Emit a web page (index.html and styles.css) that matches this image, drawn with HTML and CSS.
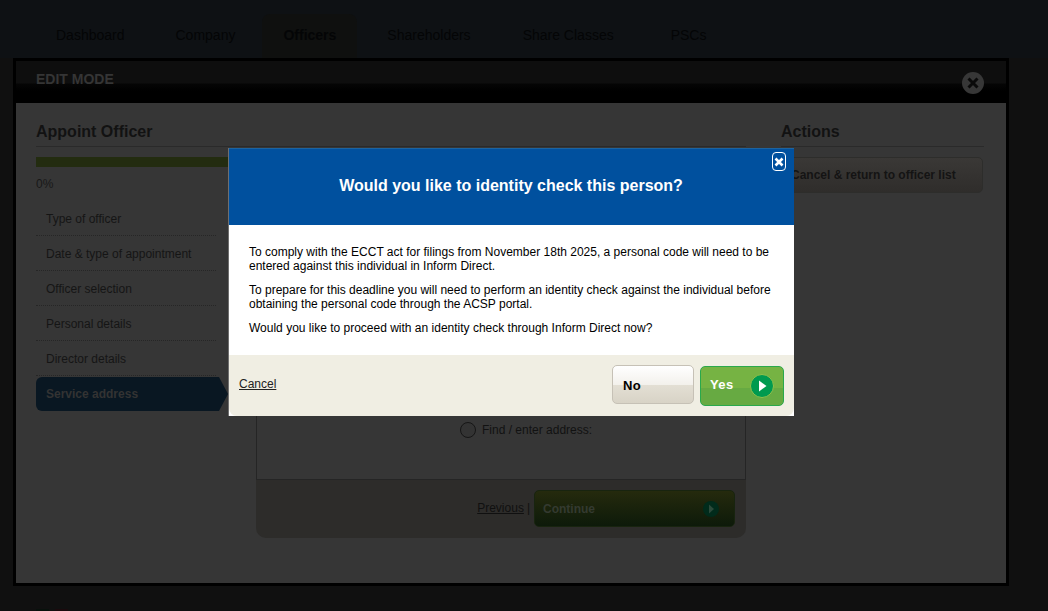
FILE: index.html
```html
<!DOCTYPE html>
<html lang="en">
<head>
<meta charset="utf-8">
<title>Appoint Officer</title>
<link rel="stylesheet" href="styles.css">
</head>
<body>
<nav class="nav">
  <a class="tab t-dash">Dashboard</a>
  <a class="tab t-comp">Company</a>
  <a class="tab tab-on">Officers</a>
  <a class="tab t-share">Shareholders</a>
  <a class="tab t-class">Share Classes</a>
  <a class="tab t-psc">PSCs</a>
</nav>
<section class="editor">
  <header class="editor-head">
    <span class="edit-mode">EDIT MODE</span>
    <span class="editor-close"><svg viewBox="0 0 22 22" width="22" height="22"><path d="M6.5 6.5l9 9M15.500 6.500l-9 9" stroke="#0a0a0a" stroke-width="3"/></svg></span>
  </header>
  <div class="editor-body">
    <div class="col-main">
      <h2 class="heading">Appoint Officer</h2>
      <div class="wizard">
        <aside class="side">
          <div class="progress"></div>
          <div class="pct">0%</div>
          <ul class="steps">
            <li class="step">Type of officer</li>
            <li class="step">Date &amp; type of appointment</li>
            <li class="step">Officer selection</li>
            <li class="step">Personal details</li>
            <li class="step">Director details</li>
            <li class="step step-on">Service address</li>
          </ul>
        </aside>
        <div class="panel">
          <div class="panel-box">
            <label class="find"><span class="radio"></span>Find / enter address:</label>
          </div>
          <div class="panel-foot">
            <a class="prev">Previous</a><span class="sep">|</span>
            <a class="continue">Continue<span class="cont-ico"><svg viewBox="0 0 16 16" width="16" height="16"><path d="M6 3.500l5 4.500-5 4.500z" fill="#2c4a3b"/></svg></span></a>
          </div>
        </div>
      </div>
    </div>
    <aside class="col-actions">
      <h2 class="heading">Actions</h2>
      <a class="action-btn">Cancel &amp; return to officer list</a>
    </aside>
  </div>
</section>
<footer class="foot"><span class="foot-a"></span><span class="foot-b"></span></footer>

<div class="dialog" role="dialog">
  <div class="dlg-head">
    <h1 class="dlg-title">Would you like to identity check this person?</h1>
    <span class="dlg-close"><svg viewBox="0 0 10 10" width="10" height="10"><path d="M1.500 1.500l7 7M8.500 1.500l-7 7" stroke="#fff" stroke-width="2.600"/></svg></span>
  </div>
  <div class="dlg-body">
    <p>To comply with the ECCT act for filings from November 18th 2025, a personal code will need to be entered against this individual in Inform Direct.</p>
    <p>To prepare for this deadline you will need to perform an identity check against the individual before obtaining the personal code through the ACSP portal.</p>
    <p>Would you like to proceed with an identity check through Inform Direct now?</p>
  </div>
  <div class="dlg-foot">
    <a class="dlg-cancel">Cancel</a>
    <div class="dlg-btns">
      <button class="btn-no">No</button>
      <button class="btn-yes">Yes<span class="yes-ico"><svg viewBox="0 0 24 24" width="24" height="24"><path d="M9 6.500l7.500 5.500-7.500 5.500z" fill="#fff"/></svg></span></button>
    </div>
  </div>
</div>
</body>
</html>
```
FILE: styles.css
```css
* { box-sizing: border-box; }
html, body { margin: 0; padding: 0; }
body {
  width: 1048px;
  height: 611px;
  overflow: hidden;
  position: relative;
  background: #101010;
  font-family: "Liberation Sans", Arial, sans-serif;
  font-size: 12px;
}
ul { list-style: none; margin: 0; padding: 0; }
h1, h2, p { margin: 0; }

.nav {
  height: 58px;
  background: #0e1114;
  padding: 14px 0 0 35px;
  display: flex;
}
.tab {
  height: 44px;
  padding: 13px 21px 0;
  font-size: 14px;
  color: #040506;
}
.t-comp { margin-left: 9px; }
.tab-on {
  margin-left: 6px;
  font-weight: bold;
  background: #0f100f;
  border-radius: 8px 8px 0 0;
}
.t-share { margin-left: 9px; }
.t-class { margin-left: 10px; }
.t-psc { margin-left: 15px; }

.editor {
  margin: 0 39px 0 13px;
  height: 528px;
  border: 3px solid #000;
  display: flex;
  flex-direction: column;
}
.editor-head {
  height: 42px;
  flex: none;
  background: linear-gradient(#0e0e0e 0, #0e0e0e 22px, #050505 23px, #000 30px);
  padding: 10px 20px 0;
  display: flex;
  justify-content: space-between;
}
.edit-mode {
  font-size: 14px;
  font-weight: bold;
  color: #353535;
}
.editor-close {
  width: 22px;
  height: 22px;
  margin: 1px 2px 0 0;
  border-radius: 50%;
  background: #373737;
  display: block;
}
.editor-close svg { display: block; }
.editor-body {
  flex: 1;
  background: #363636;
  padding: 19px 22px 0 20px;
  display: flex;
  gap: 35px;
}
.col-main { width: 710px; }
.col-actions { width: 203px; }
.heading {
  font-size: 16px;
  font-weight: bold;
  color: #121212;
  height: 25px;
  line-height: 19px;
  border-bottom: 1px solid #2a2a2a;
}
.wizard {
  margin-top: 10px;
  display: flex;
  gap: 28px;
}
.side { width: 192px; }
.progress { height: 10px; background: #232c10; }
.pct {
  margin-top: 10px;
  line-height: 14px;
  color: #181818;
}
.steps { margin-top: 10px; }
.step {
  height: 35px;
  width: 180px;
  padding: 11px 10px 0;
  line-height: 14px;
  color: #151515;
  border-bottom: 1px dotted #262626;
}
.step-on {
  width: 192px;
  height: 34px;
  margin-top: 1px;
  padding: 10px;
  border: 0;
  font-weight: bold;
  color: #333;
  background: #091722;
  border-radius: 6px 0 0 6px;
  clip-path: polygon(0 0, 183px 0, 192px 17px, 183px 100%, 0 100%);
}
.panel { width: 490px; }
.panel-box {
  height: 323px;
  border: 1px solid #252525;
  border-top: 0;
  padding: 264px 0 0 203px;
  display: flex;
}
.find {
  display: flex;
  align-items: center;
  height: 18px;
  color: #121212;
}
.radio {
  width: 16px;
  height: 16px;
  margin-right: 6px;
  border-radius: 50%;
  border: 1px solid #161616;
  background: #333;
}
.panel-foot {
  height: 58px;
  background: #2d2c2a;
  border-radius: 0 0 10px 10px;
  padding: 10px 11px 0 0;
  display: flex;
  justify-content: flex-end;
  align-items: flex-start;
}
.prev {
  margin-top: 11px;
  color: #101010;
  text-decoration: underline;
}
.sep {
  margin: 11px 4px 0 3px;
  color: #101010;
}
.continue {
  width: 201px;
  height: 37px;
  padding: 11px 8px 0;
  display: flex;
  justify-content: space-between;
  font-weight: bold;
  color: #343a30;
  background: linear-gradient(#252a0d, #0d1a0a);
  border: 1px solid #18240f;
  border-radius: 5px;
}
.cont-ico {
  width: 16px;
  height: 16px;
  margin: -1px 7px 0 0;
  background: #012b1b;
  border-radius: 50%;
}
.cont-ico svg { display: block; }
.action-btn {
  display: block;
  width: 213px;
  height: 36px;
  margin-top: 10px;
  margin-left: -11px;
  padding: 10px 0 0 20px;
  font-weight: bold;
  color: #141414;
  background: linear-gradient(#3a3836, #2f2d2b);
  border: 1px solid #2d2d2b;
  border-radius: 5px;
}
.foot {
  height: 25px;
  padding: 23px 0 0 36px;
  display: flex;
  gap: 6px;
}
.foot-a, .foot-b { width: 13px; height: 2px; }
.foot-a { background: #08110c; }
.foot-b { background: #1a0a0d; }

.dialog {
  position: absolute;
  left: 228px;
  top: 148px;
  width: 566px;
  height: 268px;
  display: flex;
  flex-direction: column;
  background: #fff;
  border-left: 1px solid #6f6f6f;
}
.dlg-head {
  position: relative;
  height: 77px;
  background: #00509e;
  padding-top: 27px;
  border-top: 1px solid #1d639f;
}
.dlg-title {
  font-size: 16px;
  line-height: 19px;
  text-align: center;
  color: #fff;
  font-weight: bold;
  padding-right: 1px;
}
.dlg-close {
  position: absolute;
  right: 8px;
  top: 3px;
  width: 14px;
  height: 19px;
  border: 1.500px solid #fff;
  border-radius: 4px;
  display: flex;
  align-items: center;
  justify-content: center;
}
.dlg-body {
  height: 130px;
  background: #fff;
  padding: 20px 20px 0;
  color: #000;
  line-height: 14px;
}
.dlg-body p { margin-bottom: 10px; }
.dlg-foot {
  flex: 1;
  background: #f0eee3;
  border-radius: 0 0 8px 8px;
  padding: 10px 10px 0;
  display: flex;
  justify-content: space-between;
}
.dlg-cancel {
  margin-top: 12px;
  color: #222;
  text-decoration: underline;
}
.dlg-btns { display: flex; gap: 6px; }
.btn-no, .btn-yes {
  font-family: "Liberation Sans", Arial, sans-serif;
  font-size: 13px;
  font-weight: bold;
  letter-spacing: 0.4px;
  text-align: left;
  border-radius: 5px;
  padding: 0;
}
.btn-no {
  width: 82px;
  height: 39px;
  padding: 1px 0 0 10px;
  color: #000;
  border: 1px solid #c6c1b6;
  background: linear-gradient(#fff 0, #f3f1ec 50%, #e3dfd4 51%, #d8d3c6 100%);
}
.btn-yes {
  width: 84px;
  height: 40px;
  padding: 0 0 3px 9px;
  margin-top: 1px;
  color: #fff;
  border: 1px solid #2aa84c;
  background: linear-gradient(#76b343 0, #76b343 54%, #67aa42 55%, #67aa42 100%);
  display: flex;
  align-items: center;
  justify-content: space-between;
}
.yes-ico {
  width: 24px;
  height: 24px;
  margin: 3px 9px 0 0;
  background: #009a4f;
  border: 1px solid #93c04a;
  border-radius: 50%;
}
.yes-ico svg { display: block; margin: -1px; }
```
